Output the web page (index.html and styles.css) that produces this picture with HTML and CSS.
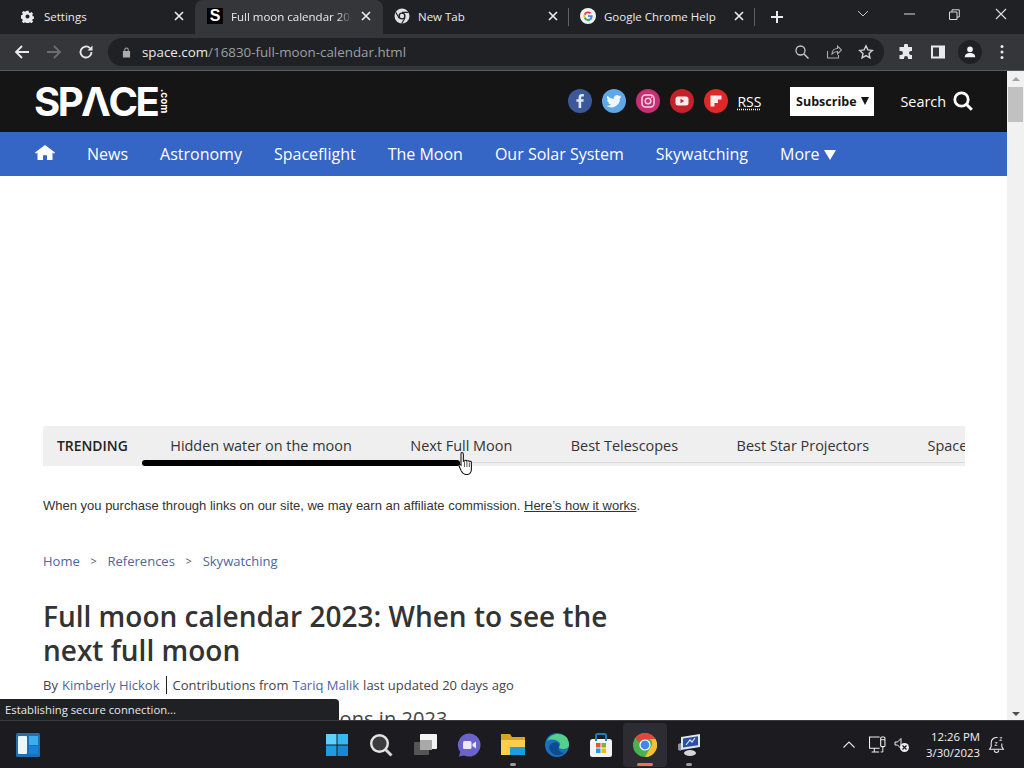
FILE: index.html
```html
<!DOCTYPE html>
<html lang="en">
<head>
<meta charset="utf-8">
<title>Full moon calendar 2023</title>
<link rel="stylesheet" href="styles.css">
</head>
<body>
<div class="screen">
  <div class="tabstrip">
    <div class="tab tab-first">
      <svg class="favicon gear" viewBox="0 0 16 16"><path fill="#e8eaed" d="M6.600 1h2.800l.4 2 1.400.6 1.700-1.100 2 2-1.100 1.700.6 1.400 2 .4v2.800l-2 .4-.6 1.400 1.100 1.700-2 2-1.700-1.100-1.400.6-.4 2H6.600l-.4-2-1.400-.6-1.700 1.100-2-2 1.100-1.700-.6-1.400-2-.4V6.600l2-.4.6-1.400-1.100-1.700 2-2 1.700 1.100 1.400-.6zM8 5.500a2.500 2.500 0 1 0 0 5 2.500 2.500 0 0 0 0-5z"/></svg>
      <span class="tab-title">Settings</span><svg class="tab-x" viewBox="0 0 10 10"><path d="M1 1l8 8M9 1 1 9" stroke="#e8eaed" stroke-width="1.700"/></svg>
    </div>
    <div class="tab tab-active">
      <span class="favicon s-icon">S</span>
      <span class="tab-title tab-fade">Full moon calendar 2023</span><svg class="tab-x" viewBox="0 0 10 10"><path d="M1 1l8 8M9 1 1 9" stroke="#e8eaed" stroke-width="1.700"/></svg>
    </div>
    <div class="tab tab-sep">
      <svg class="favicon" viewBox="0 0 16 16"><circle cx="8" cy="8" r="7.500" fill="#dfe1e5"/><circle cx="8" cy="8" r="3.600" fill="#202124"/><circle cx="8" cy="8" r="2.200" fill="#dfe1e5"/><path d="M8 4.400h6.600M5 10 1.800 4.200M11 10l-3.300 5.600" stroke="#202124" stroke-width="1.100"/></svg>
      <span class="tab-title">New Tab</span><svg class="tab-x" viewBox="0 0 10 10"><path d="M1 1l8 8M9 1 1 9" stroke="#e8eaed" stroke-width="1.700"/></svg>
    </div>
    <div class="tab tab-sep">
      <svg class="favicon" viewBox="0 0 16 16"><circle cx="8" cy="8" r="8" fill="#f1f3f4"/><path d="M12.600 8.200c0-.3 0-.6-.1-.9H8v1.800h2.600a2.300 2.300 0 0 1-1 1.500l1.500 1.200c.9-.8 1.500-2.100 1.500-3.600z" fill="#4285f4"/><path d="M8 13a4.600 4.600 0 0 0 3.100-1.200L9.600 10.600A2.800 2.800 0 0 1 5.400 9.100L3.900 10.300A4.700 4.700 0 0 0 8 13z" fill="#34a853"/><path d="M5.400 9.100a2.900 2.900 0 0 1 0-1.900L3.900 6a4.700 4.700 0 0 0 0 4.300z" fill="#fbbc05"/><path d="M8 5.200c.7 0 1.300.2 1.800.7l1.300-1.300A4.700 4.700 0 0 0 3.900 6l1.500 1.200A2.800 2.800 0 0 1 8 5.200z" fill="#ea4335"/></svg>
      <span class="tab-title">Google Chrome Help</span><svg class="tab-x" viewBox="0 0 10 10"><path d="M1 1l8 8M9 1 1 9" stroke="#e8eaed" stroke-width="1.700"/></svg>
    </div>
    <div class="new-tab"><svg width="14" height="14" viewBox="0 0 14 14"><path d="M7 1v12M1 7h12" stroke="#e8eaed" stroke-width="2"/></svg></div>
    <div class="window-controls">
      <svg width="12" height="8" viewBox="0 0 12 8"><path d="M1 1l5 5 5-5" fill="none" stroke="#c4c7c9" stroke-width="1"/></svg>
      <svg width="11" height="2" viewBox="0 0 11 2"><path d="M0 1h11" stroke="#d8d9da" stroke-width="1"/></svg>
      <svg width="11" height="11" viewBox="0 0 11 11"><path d="M.5 3h7.500v7.500H.5zM3 3V.8h7.300v7.200H8" fill="none" stroke="#d8d9da" stroke-width="1"/></svg>
      <svg width="12" height="12" viewBox="0 0 12 12"><path d="M1 1l10 10M11 1 1 11" stroke="#e0e1e2" stroke-width="1.100"/></svg>
    </div>
  </div>

  <div class="toolbar">
    <svg class="tool" viewBox="0 0 16 16"><path d="M15 8H2M8 2 2 8l6 6" fill="none" stroke="#e8eaed" stroke-width="1.800"/></svg>
    <svg class="tool" viewBox="0 0 16 16"><path d="M1 8h13M8 2l6 6-6 6" fill="none" stroke="#6b6d70" stroke-width="1.800"/></svg>
    <svg class="tool" viewBox="0 0 16 16"><path d="M13.500 8a5.500 5.500 0 1 1-1.600-3.900" fill="none" stroke="#e8eaed" stroke-width="1.800"/><path d="M14.500 1.500v5h-5z" fill="#e8eaed"/></svg>
    <div class="omnibox">
      <svg class="lock" viewBox="0 0 10 12"><path fill="#a9abae" d="M1 5h8v7H1zM2.500 5V3.500a2.500 2.500 0 0 1 5 0V5H6.400V3.500a1.400 1.400 0 0 0-2.800 0V5z"/></svg>
      <span class="url"><b>space.com</b>/16830-full-moon-calendar.html</span>
      <span class="omni-icons">
        <svg viewBox="0 0 16 16"><circle cx="6.500" cy="6.500" r="4.500" fill="none" stroke="#c4c7c9" stroke-width="1.300"/><path d="M10 10l4.500 4.500" stroke="#c4c7c9" stroke-width="1.500"/></svg>
        <svg viewBox="0 0 16 16"><path d="M1.500 7v7h11v-3M6 10c0-3.500 2.500-5.500 5.500-5.500V2l4 4-4 4V7.500C9 7.500 7.500 8.500 6 10z" fill="none" stroke="#a9abae" stroke-width="1.100"/></svg>
        <svg viewBox="0 0 16 16"><path d="M8 1.800l1.900 4.100 4.400.5-3.300 3 .9 4.400L8 11.600l-3.900 2.200.9-4.400-3.300-3 4.400-.5z" fill="none" stroke="#d0d2d4" stroke-width="1.400"/></svg>
      </span>
    </div>
    <svg class="tool tool-ext" viewBox="0 0 16 16"><path fill="#e8eaed" d="M6 1.500a2 2 0 0 1 4 0V3h4v4h-1a2 2 0 0 0 0 4h1v4h-4v-1a2 2 0 0 0-4 0v1H1.500v-4H3a2 2 0 0 0 0-4H1.500V3H6z"/></svg>
    <svg class="tool" viewBox="0 0 16 16"><path fill="#e8eaed" fill-rule="evenodd" d="M1 1.500h14v13H1zM3 3.500v9h6v-9z"/></svg>
    <span class="avatar"><svg viewBox="0 0 16 16"><circle cx="8" cy="5" r="3.200" fill="#f1f3f4"/><path fill="#f1f3f4" d="M2 14c0-3.300 2.700-4.800 6-4.800s6 1.500 6 4.800z"/></svg></span>
    <svg class="tool" viewBox="0 0 16 16"><circle cx="8" cy="2.500" r="1.500" fill="#e8eaed"/><circle cx="8" cy="8" r="1.500" fill="#e8eaed"/><circle cx="8" cy="13.500" r="1.500" fill="#e8eaed"/></svg>
  </div>

  <div class="viewport">
    <div class="page">
      <header class="site-header">
        <div class="logo"><span class="logo-word">SPΛCE</span><span class="logo-com">.com</span></div>
        <div class="header-right">
          <span class="social fb"><svg viewBox="0 0 24 24"><path fill="#dfe6f5" d="M13.200 19v-6.300h2.200l.4-2.500h-2.600V8.700c0-.8.300-1.200 1.300-1.200h1.400V5.200c-.4 0-1.200-.1-2-.1-2 0-3.300 1.200-3.300 3.300v1.800H8.400v2.500h2.200V19z"/></svg></span>
          <span class="social tw"><svg viewBox="0 0 24 24"><path fill="#eef6fd" d="M19.500 7.500a6 6 0 0 1-1.800.5 3 3 0 0 0 1.400-1.700 6 6 0 0 1-2 .8 3.100 3.100 0 0 0-5.300 2.800A8.700 8.700 0 0 1 5.400 6.700a3.100 3.100 0 0 0 1 4.100 3 3 0 0 1-1.400-.4c0 1.500 1 2.800 2.500 3.100a3 3 0 0 1-1.400 0 3.100 3.100 0 0 0 2.900 2.100A6.200 6.200 0 0 1 4.500 17a8.700 8.700 0 0 0 13.400-7.700 6 6 0 0 0 1.600-1.800z"/></svg></span>
          <span class="social ig"><svg viewBox="0 0 24 24"><rect x="6" y="6" width="12" height="12" rx="3.500" fill="none" stroke="#f7d6e4" stroke-width="1.500"/><circle cx="12" cy="12" r="2.800" fill="none" stroke="#f7d6e4" stroke-width="1.400"/><circle cx="15.600" cy="8.400" r=".8" fill="#f7d6e4"/></svg></span>
          <span class="social yt"><svg viewBox="0 0 24 24"><rect x="5.500" y="7.500" width="13" height="9" rx="2.500" fill="#f8ecec"/><path d="M10.500 9.800v4.400l3.700-2.200z" fill="#c4212a"/></svg></span>
          <span class="social fl"><svg viewBox="0 0 24 24"><path fill="#fbeaea" d="M6.500 6.500h11v4h-3.500v3.500h-3.500v3.500h-4z"/></svg></span>
          <abbr class="rss">RSS</abbr>
          <span class="subscribe">Subscribe <i class="caret-dark"></i></span>
          <span class="search">Search
            <svg viewBox="0 0 20 20"><circle cx="8.500" cy="8.500" r="6.700" fill="none" stroke="#fff" stroke-width="2.800"/><path d="M13.300 13.300l5.500 5.500" stroke="#fff" stroke-width="3"/></svg>
          </span>
        </div>
      </header>
      <nav class="site-nav">
        <svg class="home" viewBox="0 0 20 17" preserveAspectRatio="none"><path fill="#fff" d="M10 0l10 8.600-1 1.200-1.500-1.200V17H12v-5.500H8V17H2.500V8.600L1 9.800 0 8.600z"/></svg>
        <span>News</span><span>Astronomy</span><span>Spaceflight</span><span>The Moon</span><span>Our Solar System</span><span>Skywatching</span><span>More <i class="caret-light"></i></span>
      </nav>
      <main class="content">
        <div class="trending">
          <div class="trending-row">
            <strong>TRENDING</strong>
            <span>Hidden water on the moon</span><span>Next Full Moon</span><span>Best Telescopes</span><span>Best Star Projectors</span><span>Space Calendar</span>
          </div>
          <div class="trending-track"><div class="trending-thumb"></div></div>
        </div>
        <p class="affiliate">When you purchase through links on our site, we may earn an affiliate commission. <u>Here’s how it works</u>.</p>
        <div class="crumbs"><a>Home</a><span>&gt;</span><a>References</a><span>&gt;</span><a>Skywatching</a></div>
        <h1>Full moon calendar 2023: When to see the next full moon</h1>
        <div class="byline">By <a>Kimberly Hickok</a><span class="rule"></span>Contributions from <a>Tariq Malik</a> last updated 20 days ago</div>
        <p class="strap">When to see the coming full moons in 2023</p>
      </main>
    </div>
    <div class="scrollbar">
      <span class="arrow-up"></span>
      <span class="thumb"></span>
      <span class="arrow-down"></span>
    </div>
    <svg class="cursor" viewBox="0 0 14 25" preserveAspectRatio="none"><path d="M3.500 1.500c1 0 1.500.8 1.500 1.800v7l1-.2c.2-1 2-1 2.300 0 .4-.7 1.900-.6 2.200.3.500-.4 2-.3 2 1v6.500c0 2.500-1 5-3.500 5.500H7c-2 0-3-1.500-4-3.500L1 15c-.5-1.200.8-2 1.800-.8V3.300c0-1 .2-1.800.7-1.800z" fill="#fff" stroke="#111" stroke-width="1"/><path d="M6 11v5M8.300 11v5M10.600 11.500V16" stroke="#111" stroke-width=".7"/></svg>
    <div class="status-bubble">Establishing secure connection...</div>
  </div>

  <footer class="taskbar">
    <div class="widgets"><svg viewBox="0 0 24 24"><rect width="24" height="24" rx="1.500" fill="#1f6fb5"/><rect x="2" y="3" width="9" height="18" rx="1" fill="#eef6fd"/><rect x="13" y="3" width="9" height="9" fill="#39b0ee"/><rect x="13" y="13" width="9" height="8" fill="#1584d8"/></svg></div>
    <div class="task-center">
      <span class="task"><svg viewBox="0 0 24 24"><path fill="#5fd0fb" d="M1 1h10.500v10.500H1z"/><path fill="#37b7f3" d="M12.500 1H23v10.500H12.500z"/><path fill="#1f9be6" d="M1 12.500h10.500V23H1z"/><path fill="#1688da" d="M12.500 12.500H23V23H12.500z"/></svg></span>
      <span class="task"><svg viewBox="0 0 24 24"><circle cx="10.500" cy="10.500" r="8.300" fill="#3c3c40" stroke="#e4e4e4" stroke-width="2.400"/><path d="M16.500 16.500l6 6" stroke="#d8d8d8" stroke-width="3"/></svg></span>
      <span class="task"><svg viewBox="0 0 24 24"><rect x="1" y="9" width="15" height="13" rx="1" fill="#555"/><rect x="7" y="1" width="17" height="15" rx="1" fill="#f3f3f3"/><rect x="7" y="7" width="12" height="10" fill="#a9a9a9"/></svg></span>
      <span class="task"><svg viewBox="0 0 24 24"><path fill="#6a63c9" d="M12 .5a11.500 11.500 0 0 1 0 23c-1.800 0-3.400-.4-4.900-1.100L2 23.500l1.200-4.700A11.500 11.500 0 0 1 12 .5z"/><rect x="6" y="8" width="8.500" height="8" rx="1.500" fill="#eceafa"/><path d="M15.500 11l3.500-2.500v7L15.500 13z" fill="#eceafa"/></svg></span>
      <span class="task task-open"><svg viewBox="0 0 24 24"><path fill="#d9a520" d="M0 1h9l2 3h13v6H0z"/><path fill="#fbcf4b" d="M0 7h24v15H0z"/><path fill="#1f9be6" d="M9 14h15v8H9z"/></svg></span>
      <span class="task"><svg viewBox="0 0 24 24"><circle cx="12" cy="12" r="12" fill="#1a6fc0"/><path fill="#53d18c" d="M2 8C5 1 14-1 20 3c3 2 4 6 4 9 0 3-3 4-6 4-3 0-4-1-4-2 1-1 2-3 0-5C10 6 5 6 2 8z"/><path fill="#0e4c8f" d="M4 14c1-4 6-6 9-4 2 2 0 5 1 7 1 2 4 3 5 3-4 3-9 3-12 0-2-2-3-4-3-6z"/></svg></span>
      <span class="task"><svg viewBox="0 0 24 24"><rect x="1" y="6" width="22" height="18" rx="2.500" fill="#f3f3f3"/><path d="M7 8V2.500A1.500 1.500 0 0 1 8.500 1h7A1.500 1.500 0 0 1 17 2.500V8" fill="none" stroke="#1d7fae" stroke-width="2"/><rect x="7" y="10" width="4.500" height="4.500" fill="#e8532b"/><rect x="12.500" y="10" width="4.500" height="4.500" fill="#79b829"/><rect x="7" y="15.500" width="4.500" height="4.500" fill="#1f9be6"/><rect x="12.500" y="15.500" width="4.500" height="4.500" fill="#f3b811"/></svg></span>
      <span class="task task-active"><svg viewBox="0 0 24 24"><circle cx="12" cy="12" r="12" fill="#4caf50"/><path fill="#e0463a" d="M12 0a12 12 0 0 1 10.400 6H12a6 6 0 0 0-5.600 3.700L2.300 4.900A12 12 0 0 1 12 0z"/><path fill="#fbc02d" d="M22.400 6A12 12 0 0 1 12 24l5.200-9a6 6 0 0 0 0-9z"/><circle cx="12" cy="12" r="5.600" fill="#fff"/><circle cx="12" cy="12" r="4.400" fill="#3f87e8"/></svg></span>
      <span class="task task-open"><svg viewBox="0 0 24 24"><path d="M4 4l19-3v13L4 17z" fill="#dfe6f2"/><path d="M6 5.500l15-2.200v9L6 14.500z" fill="#2a4fa8"/><path d="M9 12l4-5 2 2 3-4" fill="none" stroke="#dfe6f2" stroke-width="1.200"/><path d="M1 11l3-1v8l-3-1z" fill="#8a93a6"/><ellipse cx="13" cy="20" rx="6" ry="3" fill="#d6d6d6"/></svg></span>
    </div>
    <div class="tray">
      <svg class="tray-chevron" viewBox="0 0 12 7"><path d="M.5 6.500 6 1l5.500 5.500" fill="none" stroke="#e6e6e6" stroke-width="1.100"/></svg>
      <svg class="tray-net" viewBox="0 0 16 16"><path d="M10 11.500H.5V1h9.500M5 11.500V15M2.500 15h7" fill="none" stroke="#f0f0f0" stroke-width="1"/><rect x="11" y="1" width="4" height="9" rx="1" fill="none" stroke="#f0f0f0"/><path d="M11 3.500h4M13 10v5h-2" fill="none" stroke="#f0f0f0" stroke-width=".9"/></svg>
      <svg class="tray-sound" viewBox="0 0 16 16"><path d="M1 5h2.500L7 1.500v10L3.500 8H1z" fill="none" stroke="#eee" stroke-width="1"/><circle cx="10.500" cy="10.500" r="4.500" fill="#eee"/><path d="M8.500 8.500l4 4M12.500 8.500l-4 4" stroke="#1c1c20" stroke-width="1.200"/></svg>
      <div class="clock"><div>12:26 PM</div><div>3/30/2023</div></div>
      <svg class="tray-bell" viewBox="0 0 16 16"><path d="M3 6a5 5 0 0 1 6-4.500M13 7v3l1.500 2.500h-13L3 10V6M6 13.500a2 2 0 0 0 4 0" fill="none" stroke="#eee" stroke-width="1"/><text x="6" y="9" class="zz">z</text><text x="10.500" y="5" class="zz">z</text></svg>
    </div>
  </footer>
</div>
</body>
</html>
```
FILE: styles.css
```css
* { box-sizing: border-box; }
html, body { margin: 0; padding: 0; }
body { width: 1024px; height: 768px; overflow: hidden; font-family: "Open Sans", sans-serif; background: #fff; }
.screen { width: 1024px; height: 768px; display: flex; flex-direction: column; overflow: hidden; }

/* Tab strip */
.tabstrip { height: 34px; flex: none; display: flex; align-items: stretch; background: #202124; color: #e8eaed; font-size: 11.5px; }
.tab { width: 186px; display: flex; align-items: center; padding: 0 11px 2px 11px; position: relative; }
.tab-first { width: 195px; padding-left: 21px; }
.tab-active { width: 188px; background: #35363a; border-radius: 8px 8px 0 0; padding-left: 12px; padding-right: 12px; }
.tab-sep::after { content: ""; position: absolute; right: 0; top: 8px; height: 18px; width: 1px; background: #5f6063; }
.favicon { width: 16px; height: 16px; flex: none; margin-right: 8px; }
.gear { width: 13px; height: 13px; margin-right: 10px; }
.s-icon { background: #000; color: #fff; font: bold 16px/16px "Liberation Sans", sans-serif; text-align: center; }
.tab-title { flex: 1; overflow: hidden; white-space: nowrap; min-width: 0; }
.tab-fade { -webkit-mask-image: linear-gradient(to right, #000 88%, transparent 100%); mask-image: linear-gradient(to right, #000 88%, transparent 100%); }
.tab-x { width: 10px; height: 10px; flex: none; margin-left: 9px; }
.new-tab { width: 44px; display: flex; align-items: center; justify-content: center; }
.window-controls { flex: 1; display: flex; align-items: center; justify-content: space-between; padding: 0 17px 6px 58px; }

/* Toolbar */
.toolbar { height: 37px; flex: none; display: flex; align-items: center; background: #35363a; border-bottom: 1px solid #5a5b5e; padding: 0 14px 1px; }
.tool { width: 16px; height: 16px; flex: none; margin-right: 16px; }
.tool:last-child { margin-right: 0; }
.toolbar > .tool:nth-child(3) { margin-right: 14px; }
.omnibox { width: 776px; height: 28px; border-radius: 14px; background: #202124; display: flex; align-items: center; padding: 0 10px 0 14px; margin-right: 14px; }
.lock { width: 9px; height: 12px; margin-right: 11px; flex: none; }
.url { font-size: 13.35px; color: #9aa0a6; white-space: nowrap; }
.url b { font-weight: 400; color: #e8eaed; }
.omni-icons { margin-left: auto; display: flex; gap: 16px; align-items: center; }
.omni-icons svg { width: 16px; height: 16px; }
.avatar { width: 24px; height: 24px; border-radius: 50%; background: #202124; display: flex; align-items: center; justify-content: center; margin: 0 12px 0 -4px; flex: none; }
.avatar svg { width: 14px; height: 14px; }

/* Viewport */
.viewport { flex: 1; min-height: 0; display: flex; position: relative; overflow: hidden; }
.page { flex: 1; min-width: 0; overflow: hidden; }
.scrollbar { width: 17px; flex: none; background: #f1f1f1; display: flex; flex-direction: column; align-items: center; padding: 6px 0 4px; }
.arrow-up { width: 0; height: 0; border: 4px solid transparent; border-top: 0; border-bottom: 4px solid #a3a3a3; }
.thumb { width: 15px; height: 35px; background: #c1c1c1; margin-top: 6px; }
.arrow-down { width: 0; height: 0; border: 4px solid transparent; border-bottom: 0; border-top: 4px solid #505050; margin-top: auto; }
.cursor { position: absolute; left: 458px; top: 380px; width: 15px; height: 25px; }
.status-bubble { position: absolute; left: 0; bottom: 0; width: 339px; height: 21px; background: #202124; color: #e8eaed; font-size: 11.3px; line-height: 21px; padding-left: 5px; border-radius: 0 4px 0 0; }

/* Site header */
.site-header { height: 61px; background: #151515; display: flex; align-items: center; padding: 0 35px 0 34px; color: #fff; }
.logo { display: flex; align-items: center; height: 30px; }
.logo-word { font: 700 40px/30px "Inter", sans-serif; letter-spacing: -2.5px; color: #fff; }
.logo-com { writing-mode: vertical-rl; font: 700 10px/10px "Inter", sans-serif; margin-left: 3px; }
.header-right { margin-left: auto; display: flex; align-items: center; padding-bottom: 1px; }
.social { width: 24px; height: 24px; border-radius: 50%; margin-right: 10px; flex: none; }
.social svg { width: 24px; height: 24px; display: block; }
.fb { background: #3b5998; }
.tw { background: #5ea7e8; }
.ig { background: #c62f73; }
.yt { background: #c4212a; }
.fl { background: #e12828; }
.rss { font-size: 14px; margin-left: -1px; text-decoration: underline dotted; text-underline-offset: 2px; margin-right: 29px; }
.subscribe { width: 84px; height: 29px; background: #fff; color: #151515; font-size: 12.5px; font-weight: 700; line-height: 29px; text-align: center; white-space: nowrap; }
.caret-dark { display: inline-block; border: 4.5px solid transparent; border-top: 8px solid #151515; border-bottom: 0; margin-left: 1px; vertical-align: 1px; }
.search { display: flex; align-items: center; gap: 7px; font-size: 14.4px; margin-left: 26px; margin-right: -1px; }
.search svg { width: 20px; height: 20px; }

/* Site nav */
.site-nav { height: 44px; background: #3565c5; display: flex; align-items: center; padding-left: 35px; color: #fff; font-size: 16px; gap: 32px; white-space: nowrap; }
.home { width: 20px; height: 15px; margin-top: -3px; }
.caret-light { display: inline-block; border: 6px solid transparent; border-top: 10px solid #fff; border-bottom: 0; vertical-align: 0; }

/* Content */
.content { padding: 250px 42px 0 43px; }
.trending { height: 40px; background: #efefef; overflow: hidden; border-radius: 3px 0 0 0; }
.trending-row { display: flex; height: 34px; align-items: center; padding: 4px 0 0 14px; gap: 58.5px; white-space: nowrap; font-size: 14.45px; color: #333; }
.trending-row strong { font-weight: 600; color: #222; margin-right: -16px; font-size: 13.9px; }
.trending-track { height: 6px; margin-left: 99px; background: linear-gradient(#efefef 2px, #dcdcdc 2px, #dcdcdc 3px, #efefef 3px); }
.trending-thumb { width: 318px; height: 6px; background: #000; border-radius: 3px; }
.affiliate { margin: 32px 0 0; font: 13px/16px "Liberation Sans", sans-serif; color: #333; }
.crumbs { margin-top: 38px; display: flex; gap: 10.75px; font-size: 13px; line-height: 18px; color: #555; }
.crumbs a { color: #4f6599; }
.crumbs span { font-size: 11px; }
h1 { margin: 29px 0 0; width: 600px; font-size: 28px; line-height: 34px; font-weight: 600; color: #333; }
.byline { margin-top: 8px; font-size: 13px; line-height: 20px; color: #444; white-space: nowrap; display: flex; gap: 4px; align-items: center; }
.byline a { color: #4f6599; }
.rule { width: 1px; height: 18px; background: #222; margin: 0 2px; }
.strap { margin: 12px 0 0; font-size: 20px; line-height: 24px; color: #444; white-space: nowrap; letter-spacing: .05px; }

/* Taskbar */
.taskbar { height: 48px; flex: none; background: #1c1c20; border-top: 1px solid #3a3a3c; display: flex; align-items: center; color: #f2f2f2; }
.widgets { width: 315px; padding-left: 16px; flex: none; display: flex; }
.widgets svg { width: 24px; height: 24px; }
.task-center { display: flex; flex: none; }
.task { width: 44px; height: 44px; display: flex; align-items: center; justify-content: center; position: relative; }
.task svg { width: 24px; height: 24px; }
.task-active { background: #2c2c32; border-radius: 4px; }
.task-active::after { content: ""; position: absolute; left: 14px; right: 14px; bottom: 1px; height: 3px; border-radius: 2px; background: #e8735a; }
.task-open::after { content: ""; position: absolute; left: 19px; right: 19px; bottom: 1px; height: 3px; border-radius: 2px; background: #9a9a9a; }
.tray { flex: 1; display: flex; align-items: center; padding-left: 132px; }
.tray-chevron { width: 12px; height: 7px; }
.tray-net { width: 17px; height: 17px; margin-left: 14px; }
.tray-sound { width: 16px; height: 16px; margin-left: 8px; }
.clock { width: 70px; text-align: right; font-size: 11.4px; line-height: 16px; }
.tray-bell { width: 17px; height: 17px; margin-left: 8px; }
.zz { font-size: 6px; fill: #eee; font-family: "Open Sans", sans-serif; }
```
